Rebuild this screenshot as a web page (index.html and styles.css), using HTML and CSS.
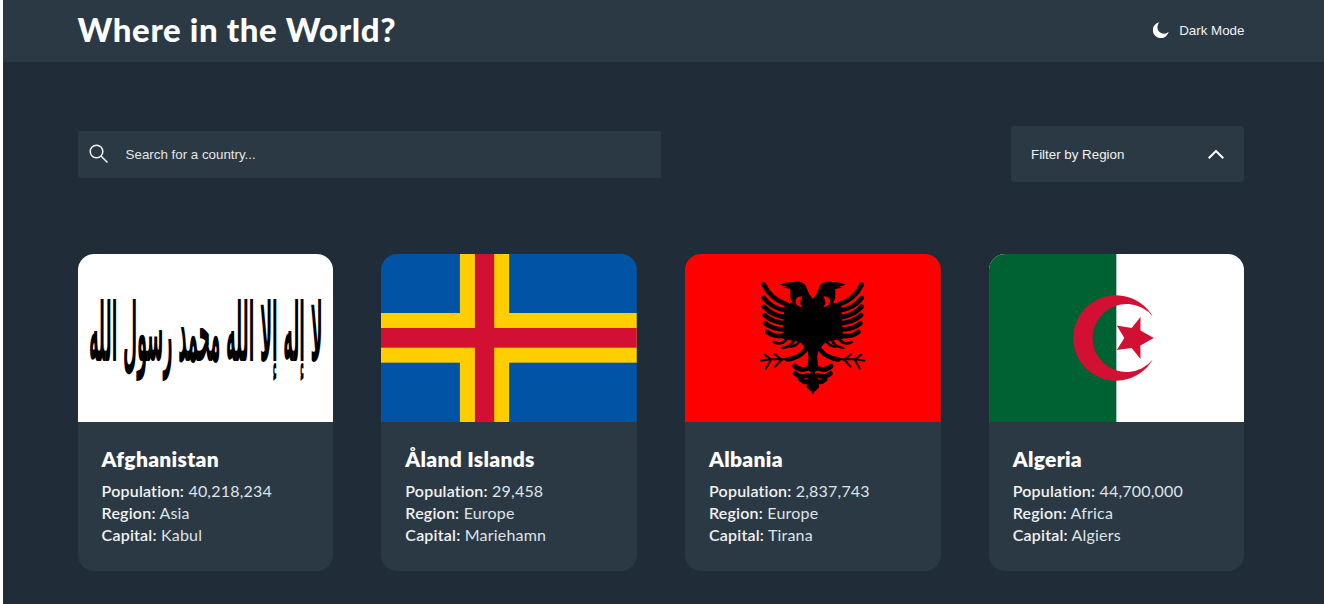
FILE: index.html
```html
<!DOCTYPE html>
<html lang="en">
<head>
    <meta charset="UTF-8">
    <meta name="viewport" content="width=device-width, initial-scale=1.0">
    <title>Where in the World?</title>
    <link rel="stylesheet" href="styles.css">
</head>
<body>
    <div class="page">
        <header class="topbar">
            <h1>Where in the World?</h1>
            <button class="theme-btn" type="button">
                <svg class="moon" viewBox="0 0 16 16"><path d="M6.3.3A8 8 0 1 0 15.7 9.7 6.6 6.6 0 0 1 6.3.3Z"/></svg>
                Dark Mode
            </button>
        </header>

        <main class="content">
            <div class="controls">
                <label class="search">
                    <svg class="search-icon" viewBox="0 0 20 20"><circle cx="7.5" cy="7.5" r="6.3"/><path d="M12 12l6.5 6.5"/></svg>
                    <input type="text" placeholder="Search for a country...">
                </label>
                <div class="filter">
                    <span>Filter by Region</span>
                    <svg class="chevron" viewBox="0 0 16 9"><path d="M.7 8.3 8 1l7.3 7.3"/></svg>
                </div>
            </div>

            <div class="cards">
                <article class="card">
                    <svg class="flag" viewBox="0 0 256 168" preserveAspectRatio="none">
                        <rect width="256" height="168" fill="#fff"/>
                        <text class="shahada" transform="translate(128 107) scale(1 4.1)" textLength="234" lengthAdjust="spacingAndGlyphs" direction="rtl" lang="ar">لا إله إلا الله محمد رسول الله</text>
                    </svg>
                    <div class="card-body">
                        <h2>Afghanistan</h2>
                        <p><b>Population:</b> 40,218,234</p>
                        <p><b>Region:</b> Asia</p>
                        <p><b>Capital:</b> Kabul</p>
                    </div>
                </article>

                <article class="card">
                    <svg class="flag" viewBox="0 0 256 168" preserveAspectRatio="none">
                        <rect width="256" height="168" fill="#0053a5"/>
                        <rect x="79" width="49.3" height="168" fill="#ffce00"/>
                        <rect y="59" width="256" height="49.7" fill="#ffce00"/>
                        <rect x="94" width="19.3" height="168" fill="#d21034"/>
                        <rect y="74" width="256" height="19.7" fill="#d21034"/>
                    </svg>
                    <div class="card-body">
                        <h2>Åland Islands</h2>
                        <p><b>Population:</b> 29,458</p>
                        <p><b>Region:</b> Europe</p>
                        <p><b>Capital:</b> Mariehamn</p>
                    </div>
                </article>

                <article class="card">
                    <svg class="flag" viewBox="0 0 256 168" preserveAspectRatio="none">
                        <defs>
                            <g id="half-eagle">
                                <!-- head and body, red blob is the gap under the neck -->
                                <path d="M191 90 178 72 166 44C154 32 140 34 128 36L106 38 90 44 112 50 100 52 122 58C120 78 122 90 128 98L104 106 98 206 150 216 172 240 191 240Z"/>
                                <path class="gap" d="M158 80C146 78 136 84 137 96 139 106 150 113 158 110 150 104 148 92 158 80Z"/>
                                <path class="feather" d="M42 44C54 70 76 92 112 104"/>
                                <path class="feather" d="M42 84C56 104 80 118 112 122"/>
                                <path class="feather" d="M42 110C58 128 82 140 112 142"/>
                                <path class="feather" d="M44 136C60 150 84 160 112 160"/>
                                <path class="feather" d="M46 160C62 174 86 180 112 178"/>
                                <path class="feather" d="M52 186C68 198 90 202 114 194"/>
                                <path class="feather thin" d="M72 216C90 226 106 218 114 200"/>
                                <path class="feather thin" d="M98 234C116 234 130 220 134 206"/>
                                <path class="feather thin" d="M122 230C136 228 146 220 150 210"/>
                                <path class="feather" d="M112 268C134 266 156 254 168 238"/>
                                <path class="talon" d="M114 268 62 268M62 268 34 272M62 268 44 254M64 268 48 296M96 270 74 252M94 270 76 290"/>
                                <path d="M191 236 172 236 176 262 172 300 191 310Z"/>
                                <path class="feather" d="M134 288C144 298 156 302 172 296"/>
                                <path class="feather" d="M136 310C146 320 160 322 174 316"/>
                                <path class="feather" d="M152 328C160 336 168 338 176 334"/>
                                <path d="M191 372 170 352 174 320 191 296Z"/>
                            </g>
                        </defs>
                        <rect width="256" height="168" fill="#f00"/>
                        <g transform="translate(65 16) scale(.3333)">
                            <use href="#half-eagle"/>
                            <use href="#half-eagle" transform="translate(378) scale(-1 1)"/>
                        </g>
                    </svg>
                    <div class="card-body">
                        <h2>Albania</h2>
                        <p><b>Population:</b> 2,837,743</p>
                        <p><b>Region:</b> Europe</p>
                        <p><b>Capital:</b> Tirana</p>
                    </div>
                </article>

                <article class="card">
                    <svg class="flag" viewBox="0 0 256 168" preserveAspectRatio="none">
                        <rect width="256" height="168" fill="#fff"/>
                        <rect width="127.5" height="168" fill="#006233"/>
                        <path fill="#d21034" d="M164 62.5A42.7 42.7 0 1 0 164 105.5 34 34 0 1 1 164 62.5Z"/>
                        <path fill="#d21034" d="M151.7 63 151.6 76.6 165 84 151.6 91.4 151.7 105 142.8 94 127.9 96 135.5 84 127.9 71.5 142.8 74Z"/>
                    </svg>
                    <div class="card-body">
                        <h2>Algeria</h2>
                        <p><b>Population:</b> 44,700,000</p>
                        <p><b>Region:</b> Africa</p>
                        <p><b>Capital:</b> Algiers</p>
                    </div>
                </article>
            </div>
        </main>
    </div>
</body>
</html>
```

FILE: styles.css
```css
:root {
    --bg-color: #202c37;
    --panel-color: #2b3945;
    --text-color: #ffffff;
    --radius: 16px;
}

* {
    box-sizing: border-box;
}

html, body {
    height: 100%;
}

body {
    margin: 0;
    padding-left: 3px;
    background: #ffffff;
    overflow: hidden;
}

.page {
    min-height: 100%;
    background: var(--bg-color);
    color: var(--text-color);
    font-family: "Lato", "Noto Sans", sans-serif;
}

.topbar {
    height: 62px;
    padding: 0 79.6px 2px 74.6px;
    display: flex;
    align-items: center;
    justify-content: space-between;
    background: var(--panel-color);
}

.topbar h1 {
    margin: 0 0 2px;
    font-size: 33px;
    letter-spacing: .6px;
    font-weight: 900;
}

.theme-btn {
    display: flex;
    align-items: center;
    gap: 10px;
    padding: 0;
    border: 0;
    background: none;
    color: #f2f2f2;
    font-family: "Liberation Sans", sans-serif;
    font-size: 13.33px;
}

.moon {
    width: 16px;
    height: 16px;
    fill: #ffffff;
}

.content {
    padding: 64px 79.6px 0 74.6px;
}

.controls {
    height: 56px;
    display: flex;
    align-items: center;
    justify-content: space-between;
}

.search {
    width: 583px;
    height: 47px;
    display: flex;
    align-items: center;
    padding-left: 11px;
    gap: 15px;
    background: var(--panel-color);
}

.search-icon {
    width: 20px;
    height: 20px;
    fill: none;
    stroke: #f2f2f2;
    stroke-width: 1.5;
}

.search input {
    flex: 1;
    border: 0;
    outline: 0;
    background: none;
    color: #ffffff;
    font-family: "Liberation Sans", sans-serif;
    font-size: 13.33px;
}

.search input::placeholder {
    color: #e6e6e6;
    opacity: 1;
}

.filter {
    width: 233px;
    height: 56px;
    display: flex;
    align-items: center;
    justify-content: space-between;
    padding: 0 20px 0 19.6px;
    border-radius: 4px;
    background: var(--panel-color);
    color: #f2f2f2;
    font-family: "Liberation Sans", sans-serif;
    font-size: 13.33px;
}

.chevron {
    width: 16px;
    height: 9px;
    fill: none;
    stroke: #ffffff;
    stroke-width: 2;
}

.cards {
    margin-top: 72px;
    display: grid;
    grid-template-columns: repeat(4, 1fr);
    gap: 48px;
}

.card {
    height: 317px;
    border-radius: var(--radius);
    background: var(--panel-color);
    overflow: hidden;
}

.flag {
    display: block;
    width: 100%;
    height: 168px;
}

.shahada {
    font-family: "DejaVu Sans", sans-serif;
    font-size: 20px;
    font-weight: 700;
    text-anchor: middle;
}

.gap {
    fill: #f00;
}

.feather {
    fill: none;
    stroke: #000;
    stroke-width: 14;
    stroke-linecap: round;
}

.feather.thin {
    stroke-width: 8;
}

.talon {
    fill: none;
    stroke: #000;
    stroke-width: 6;
    stroke-linecap: round;
}

.card-body {
    padding: 23px 24px 0;
}

.card-body h2 {
    margin: 0 0 7px;
    font-size: 21px;
    line-height: 28px;
    letter-spacing: .3px;
    font-weight: 800;
}

.card-body p {
    margin: 0;
    font-size: 16px;
    line-height: 22px;
    letter-spacing: .2px;
    font-weight: 400;
    color: #dfe3e6;
}

.card-body b {
    font-weight: 600;
    color: #f2f2f2;
}
```
